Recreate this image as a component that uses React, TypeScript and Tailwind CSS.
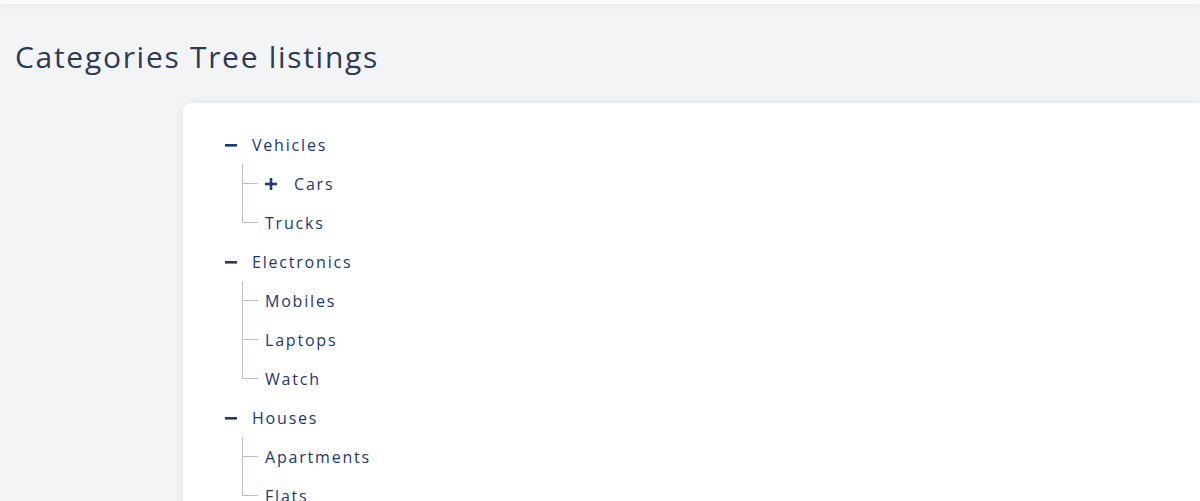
import React from "react";

type Node = { label: string; icon?: "minus" | "plus"; children?: Node[] };

const tree: Node[] = [
  {
    label: "Vehicles",
    icon: "minus",
    children: [{ label: "Cars", icon: "plus" }, { label: "Trucks" }],
  },
  {
    label: "Electronics",
    icon: "minus",
    children: [{ label: "Mobiles" }, { label: "Laptops" }, { label: "Watch" }],
  },
  {
    label: "Houses",
    icon: "minus",
    children: [{ label: "Apartments" }, { label: "Flats" }],
  },
];

function Minus() {
  return (
    <svg width="12" height="12" viewBox="0 0 12 12" className="shrink-0">
      <rect x="0" y="5" width="12" height="2.6" fill="#1e3a7b" />
    </svg>
  );
}

function Plus() {
  return (
    <svg width="12" height="12" viewBox="0 0 12 12" className="shrink-0">
      <rect x="0" y="4.7" width="12" height="2.6" fill="#1e3a7b" />
      <rect x="4.7" y="0" width="2.6" height="12" fill="#1e3a7b" />
    </svg>
  );
}

function Label({ text }: { text: string }) {
  return (
    <span className="text-[16px] leading-none font-medium tracking-[1.8px] text-[#1a3774]">
      {text}
    </span>
  );
}

function Child({ node, last }: { node: Node; last: boolean }) {
  return (
    <div className="flex h-[39px] items-stretch">
      <div className="flex w-[16px] shrink-0 flex-col">
        <div className="h-1/2 border-b border-l border-[#b6bfcf]" />
        <div className={last ? "h-1/2" : "h-1/2 border-l border-[#b6bfcf]"} />
      </div>
      <div className="flex items-center pl-[7px]">
        {node.icon === "plus" && (
          <span className="mr-[17px] flex">
            <Plus />
          </span>
        )}
        <Label text={node.label} />
      </div>
    </div>
  );
}

function Parent({ node }: { node: Node }) {
  return (
    <div>
      <div className="flex h-[39px] items-center">
        <Minus />
        <span className="ml-[15px] flex">
          <Label text={node.label} />
        </span>
      </div>
      <div className="ml-[17px]">
        {node.children?.map((c, i) => (
          <Child key={c.label} node={c} last={i === (node.children?.length ?? 0) - 1} />
        ))}
      </div>
    </div>
  );
}

export default function App() {
  return (
    <div
      className="h-[501px] w-[1200px] overflow-hidden bg-[#f3f4f6]"
      style={{ fontFamily: '"Open Sans", "Noto Sans", sans-serif' }}
    >
      <div className="h-[4px] bg-[#fbfbfc] shadow-[0_2px_5px_rgba(0,0,0,0.06)]" />
      <div className="pl-[15px] pt-[35px]">
        <h1 className="text-[30px] leading-[36px] font-normal tracking-[1.7px] text-[#2b3a55]">
          Categories Tree listings
        </h1>
      </div>
      <div className="ml-[183px] mt-[28px] h-[420px] rounded-tl-[8px] bg-white pl-[42px] pt-[22px] shadow-[0_0_10px_rgba(0,0,0,0.08)]">
        {tree.map((n) => (
          <Parent key={n.label} node={n} />
        ))}
      </div>
    </div>
  );
}
